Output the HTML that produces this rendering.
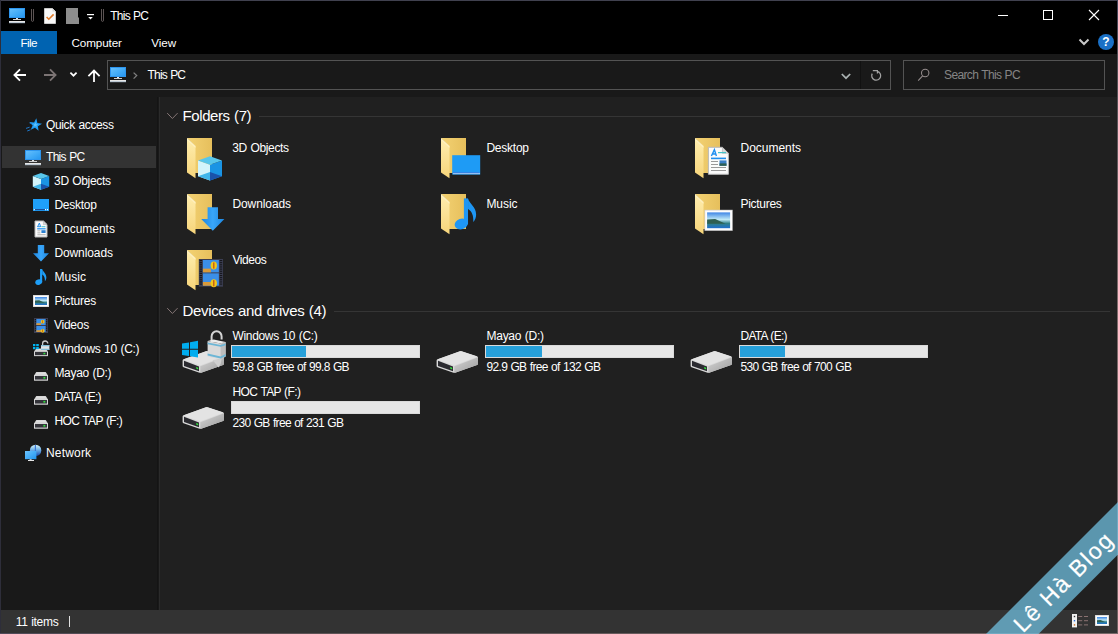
<!DOCTYPE html>
<html><head><meta charset="utf-8"><title>This PC</title>
<style>
html,body{margin:0;padding:0;}
body{width:1118px;height:634px;overflow:hidden;background:#000;position:relative;font-family:"Liberation Sans",sans-serif;}
.b{position:absolute;display:block;}
.t{position:absolute;white-space:pre;font-family:"Liberation Sans",sans-serif;}
</style></head><body>
<div class="b" style="left:0px;top:0px;width:1118px;height:634px;background:#000;"></div>
<div class="b" style="left:1px;top:54px;width:1116px;height:556px;background:#191919;"></div>
<div class="b" style="left:160px;top:97px;width:957px;height:513px;background:#202020;"></div>
<div class="b" style="left:159px;top:97px;width:1px;height:513px;background:#2b2b2b;"></div>
<div class="b" style="left:157px;top:97px;width:1px;height:513px;background:#141414;"></div>
<div class="b" style="left:1px;top:610px;width:1116px;height:23px;background:#333333;"></div>
<div class="b" style="left:0px;top:0px;width:1118px;height:1px;background:#40414f;"></div>
<div class="b" style="left:0px;top:0px;width:1px;height:634px;background:#2e2e3a;"></div>
<div class="b" style="left:1117px;top:0px;width:1px;height:634px;background:linear-gradient(180deg,#42435a 0,#4c4c52 60px,#7d6b6b 300px,#6e6060 100%);"></div>
<div class="b" style="left:0px;top:633px;width:1118px;height:1px;background:linear-gradient(90deg,#4f4a58 0,#5a4f52 20%,#776868 100%);"></div>
<div class="b" style="left:1px;top:31px;width:56px;height:23px;background:#0063b1;"></div>
<div class="b" style="left:107px;top:60px;width:784px;height:30px;background:transparent;border:1px solid #535353;box-sizing:border-box;"></div>
<div class="b" style="left:860px;top:61px;width:1px;height:28px;background:#111111;"></div>
<div class="b" style="left:903px;top:60px;width:202px;height:30px;background:transparent;border:1px solid #535353;box-sizing:border-box;"></div>
<div class="b" style="left:2px;top:146px;width:154px;height:22px;background:#333333;"></div>
<div class="t" style="left:110.30px;top:9.84px;font-size:12px;line-height:12px;letter-spacing:-0.762px;word-spacing:0.6px;color:#fff;">This PC</div>
<div class="t" style="left:20.60px;top:37.10px;font-size:11.7px;line-height:11.7px;letter-spacing:-0.609px;word-spacing:0.6px;color:#fff;">File</div>
<div class="t" style="left:71.50px;top:37.10px;font-size:11.7px;line-height:11.7px;letter-spacing:-0.116px;word-spacing:0.6px;color:#fff;">Computer</div>
<div class="t" style="left:151.20px;top:37.10px;font-size:11.7px;line-height:11.7px;letter-spacing:-0.057px;word-spacing:0.6px;color:#fff;">View</div>
<div class="t" style="left:147.60px;top:68.84px;font-size:12px;line-height:12px;letter-spacing:-0.812px;word-spacing:0.6px;color:#fff;">This PC</div>
<div class="t" style="left:944.10px;top:68.84px;font-size:12px;line-height:12px;letter-spacing:-0.655px;word-spacing:0.6px;color:#858585;">Search This PC</div>
<div class="t" style="left:15.70px;top:615.84px;font-size:12px;line-height:12px;letter-spacing:-0.296px;word-spacing:0.6px;color:#fff;">11 items</div>
<div class="b" style="left:69px;top:616px;width:1px;height:11px;background:#e0e0e0;"></div>
<div class="t" style="left:46.00px;top:118.84px;font-size:12px;line-height:12px;letter-spacing:-0.360px;word-spacing:0.6px;color:#fff;">Quick access</div>
<div class="t" style="left:46.00px;top:150.84px;font-size:12px;line-height:12px;letter-spacing:-0.695px;word-spacing:0.6px;color:#fff;">This PC</div>
<div class="t" style="left:54.10px;top:174.84px;font-size:12px;line-height:12px;letter-spacing:-0.351px;word-spacing:0.6px;color:#fff;">3D Objects</div>
<div class="t" style="left:54.40px;top:198.84px;font-size:12px;line-height:12px;letter-spacing:-0.253px;word-spacing:0.6px;color:#fff;">Desktop</div>
<div class="t" style="left:54.40px;top:222.84px;font-size:12px;line-height:12px;letter-spacing:-0.023px;word-spacing:0.6px;color:#fff;">Documents</div>
<div class="t" style="left:54.40px;top:246.84px;font-size:12px;line-height:12px;letter-spacing:-0.097px;word-spacing:0.6px;color:#fff;">Downloads</div>
<div class="t" style="left:54.40px;top:270.84px;font-size:12px;line-height:12px;letter-spacing:0.039px;word-spacing:0.6px;color:#fff;">Music</div>
<div class="t" style="left:54.40px;top:294.84px;font-size:12px;line-height:12px;letter-spacing:-0.221px;word-spacing:0.6px;color:#fff;">Pictures</div>
<div class="t" style="left:54.00px;top:318.84px;font-size:12px;line-height:12px;letter-spacing:-0.254px;word-spacing:0.6px;color:#fff;">Videos</div>
<div class="t" style="left:54.00px;top:342.84px;font-size:12px;line-height:12px;letter-spacing:-0.313px;word-spacing:0.6px;color:#fff;">Windows 10 (C:)</div>
<div class="t" style="left:54.40px;top:366.84px;font-size:12px;line-height:12px;letter-spacing:-0.305px;word-spacing:0.6px;color:#fff;">Mayao (D:)</div>
<div class="t" style="left:54.40px;top:390.84px;font-size:12px;line-height:12px;letter-spacing:-0.702px;word-spacing:0.6px;color:#fff;">DATA (E:)</div>
<div class="t" style="left:54.40px;top:414.84px;font-size:12px;line-height:12px;letter-spacing:-0.618px;word-spacing:0.6px;color:#fff;">HOC TAP (F:)</div>
<div class="t" style="left:46.00px;top:446.84px;font-size:12px;line-height:12px;letter-spacing:0.176px;word-spacing:0.6px;color:#fff;">Network</div>
<div class="t" style="left:182.50px;top:108.30px;font-size:15px;line-height:15px;letter-spacing:-0.402px;word-spacing:0.6px;color:#fff;">Folders (7)</div>
<div class="b" style="left:259px;top:116px;width:851px;height:1px;background:#353535;"></div>
<div class="t" style="left:182.50px;top:303.30px;font-size:15px;line-height:15px;letter-spacing:-0.334px;word-spacing:0.6px;color:#fff;">Devices and drives (4)</div>
<div class="b" style="left:334px;top:311px;width:776px;height:1px;background:#353535;"></div>
<div class="t" style="left:232.30px;top:141.84px;font-size:12px;line-height:12px;letter-spacing:-0.362px;word-spacing:0.6px;color:#fff;">3D Objects</div>
<div class="t" style="left:486.40px;top:141.84px;font-size:12px;line-height:12px;letter-spacing:-0.236px;word-spacing:0.6px;color:#fff;">Desktop</div>
<div class="t" style="left:740.50px;top:141.84px;font-size:12px;line-height:12px;letter-spacing:-0.023px;word-spacing:0.6px;color:#fff;">Documents</div>
<div class="t" style="left:232.40px;top:197.84px;font-size:12px;line-height:12px;letter-spacing:-0.084px;word-spacing:0.6px;color:#fff;">Downloads</div>
<div class="t" style="left:486.40px;top:197.84px;font-size:12px;line-height:12px;letter-spacing:-0.036px;word-spacing:0.6px;color:#fff;">Music</div>
<div class="t" style="left:740.50px;top:197.84px;font-size:12px;line-height:12px;letter-spacing:-0.292px;word-spacing:0.6px;color:#fff;">Pictures</div>
<div class="t" style="left:232.40px;top:253.84px;font-size:12px;line-height:12px;letter-spacing:-0.414px;word-spacing:0.6px;color:#fff;">Videos</div>
<div class="t" style="left:232.50px;top:329.84px;font-size:12px;line-height:12px;letter-spacing:-0.328px;word-spacing:0.6px;color:#fff;">Windows 10 (C:)</div>
<div class="t" style="left:232.50px;top:360.84px;font-size:12px;line-height:12px;letter-spacing:-0.666px;word-spacing:0.6px;color:#fff;">59.8 GB free of 99.8 GB</div>
<div class="b" style="left:231px;top:345px;width:189px;height:13px;background:#e6e6e6;border:1px solid #dadada;box-sizing:border-box;"></div>
<div class="b" style="left:232px;top:346px;width:74px;height:11px;background:#26a0da;"></div>
<div class="t" style="left:486.50px;top:329.84px;font-size:12px;line-height:12px;letter-spacing:-0.272px;word-spacing:0.6px;color:#fff;">Mayao (D:)</div>
<div class="t" style="left:486.50px;top:360.84px;font-size:12px;line-height:12px;letter-spacing:-0.667px;word-spacing:0.6px;color:#fff;">92.9 GB free of 132 GB</div>
<div class="b" style="left:485px;top:345px;width:189px;height:13px;background:#e6e6e6;border:1px solid #dadada;box-sizing:border-box;"></div>
<div class="b" style="left:486px;top:346px;width:56px;height:11px;background:#26a0da;"></div>
<div class="t" style="left:740.50px;top:329.84px;font-size:12px;line-height:12px;letter-spacing:-0.727px;word-spacing:0.6px;color:#fff;">DATA (E:)</div>
<div class="t" style="left:740.50px;top:360.84px;font-size:12px;line-height:12px;letter-spacing:-0.684px;word-spacing:0.6px;color:#fff;">530 GB free of 700 GB</div>
<div class="b" style="left:739px;top:345px;width:189px;height:13px;background:#e6e6e6;border:1px solid #dadada;box-sizing:border-box;"></div>
<div class="b" style="left:740px;top:346px;width:45px;height:11px;background:#26a0da;"></div>
<div class="t" style="left:232.50px;top:385.84px;font-size:12px;line-height:12px;letter-spacing:-0.618px;word-spacing:0.6px;color:#fff;">HOC TAP (F:)</div>
<div class="t" style="left:232.50px;top:416.84px;font-size:12px;line-height:12px;letter-spacing:-0.684px;word-spacing:0.6px;color:#fff;">230 GB free of 231 GB</div>
<div class="b" style="left:231px;top:401px;width:189px;height:13px;background:#e6e6e6;border:1px solid #dadada;box-sizing:border-box;"></div>
<svg class="b" style="left:0;top:0" width="1118" height="634" viewBox="0 0 1118 634"><polygon points="1118,502 1118,554.5 1038.5,634 986,634" fill="rgb(113,196,229)" fill-opacity="0.72"/></svg>
<svg width="0" height="0" style="position:absolute"><defs>
<linearGradient id="gScr" x1="0" y1="0" x2="1" y2="1"><stop offset="0" stop-color="#6cc2fc"/><stop offset=".5" stop-color="#45adf8"/><stop offset="1" stop-color="#2294ee"/></linearGradient>
<linearGradient id="gFb" x1="0" y1="0" x2="1" y2="0"><stop offset="0" stop-color="#f3d273"/><stop offset="1" stop-color="#e6bf5c"/></linearGradient>
<linearGradient id="gFf" x1="0" y1="0" x2="0" y2="1"><stop offset="0" stop-color="#ffeeb0"/><stop offset="1" stop-color="#f7d57a"/></linearGradient>
<linearGradient id="gDl" x1="0" y1="0" x2="1" y2="0"><stop offset="0" stop-color="#1c86e0"/><stop offset=".5" stop-color="#39a6fa"/><stop offset="1" stop-color="#1c86e0"/></linearGradient>
<linearGradient id="gDr" x1="0" y1="0" x2="1" y2="1"><stop offset="0" stop-color="#d6d6d6"/><stop offset="1" stop-color="#9c9c9c"/></linearGradient>
<linearGradient id="gGl" x1="0" y1="0" x2="0" y2="1"><stop offset="0" stop-color="#d8f4f6"/><stop offset=".45" stop-color="#6fb2e8"/><stop offset="1" stop-color="#1745a8"/></linearGradient>
<linearGradient id="gSky" x1="0" y1="0" x2="0" y2="1"><stop offset="0" stop-color="#3f86e6"/><stop offset=".45" stop-color="#bfe9f6"/><stop offset=".7" stop-color="#2f7f86"/><stop offset="1" stop-color="#1f6fd0"/></linearGradient>
</defs></svg>
<svg class="b" style="left:9px;top:8px;" width="16" height="16" viewBox="0 0 16 16"><rect x="0" y="0" width="16" height="10" fill="url(#gScr)"/><rect x="0.5" y="0.5" width="15" height="9" fill="none" stroke="#2d95ee" stroke-width="1"/><rect x="7" y="10" width="2" height="1" fill="#e8e8e8"/><rect x="4" y="11" width="8" height="1" fill="#cfcfcf"/><rect x="0" y="13" width="16" height="2" fill="#e6e6e6"/><rect x="0" y="14.3" width="16" height="0.9" fill="#a9b9c9"/></svg>
<svg class="b" style="left:30px;top:8px;" width="5" height="15" viewBox="0 0 5 15"><path d="M1.5 1 L1.5 12 Q1.5 13.5 2.5 13.5 Q3.5 13.5 3.5 12 L3.5 1" fill="none" stroke="#5c5454" stroke-width="1"/></svg>
<svg class="b" style="left:100px;top:8px;" width="5" height="15" viewBox="0 0 5 15"><path d="M1.5 1 L1.5 12 Q1.5 13.5 2.5 13.5 Q3.5 13.5 3.5 12 L3.5 1" fill="none" stroke="#5c5454" stroke-width="1"/></svg>
<svg class="b" style="left:44px;top:8px;" width="13" height="16" viewBox="0 0 13 16"><path d="M0.5 0.5 L8.5 0.5 L11.5 3.5 L11.5 15.5 L0.5 15.5 Z" fill="#f7f7f7" stroke="#c9c9c9"/><path d="M8.5 0.5 L8.5 3.5 L11.5 3.5 Z" fill="#d5d5d5"/><path d="M2.6 9 L4.8 11.2 L9.6 6.4" fill="none" stroke="#e07a2a" stroke-width="1.6"/></svg>
<svg class="b" style="left:66px;top:8px;" width="14" height="16" viewBox="0 0 14 16"><path d="M0 0 L12 0 L12 9 L13 10 L13 16 L0 16 Z" fill="#8d8d8d"/></svg>
<svg class="b" style="left:86px;top:13px;" width="9" height="8" viewBox="0 0 9 8"><rect x="1" y="1" width="7" height="1.2" fill="#fff"/><polygon points="2.2,4 6.8,4 4.5,6.6" fill="#fff"/></svg>
<div class="b" style="left:998px;top:15px;width:10px;height:1px;background:#fff;"></div>
<div class="b" style="left:1043px;top:10px;width:10px;height:10px;background:transparent;border:1px solid #fff;box-sizing:border-box;"></div>
<svg class="b" style="left:1088px;top:9px;" width="12" height="12" viewBox="0 0 12 12"><path d="M1 1 L11 11 M11 1 L1 11" stroke="#fff" stroke-width="1.1" fill="none"/></svg>
<svg class="b" style="left:1078px;top:37px;" width="12" height="10" viewBox="0 0 12 10"><path d="M1.5 2.5 L6 7 L10.5 2.5" fill="none" stroke="#c8c8c8" stroke-width="2"/></svg>
<svg class="b" style="left:1098px;top:34px;" width="16" height="16" viewBox="0 0 16 16"><circle cx="8" cy="8" r="8" fill="#1a70c6"/><text x="8" y="12.3" font-family="Liberation Sans" font-weight="bold" font-size="12" fill="#fff" text-anchor="middle">?</text></svg>
<svg class="b" style="left:13px;top:68px;" width="14" height="14" viewBox="0 0 14 14"><path d="M13 7 L1.6 7 M7 1.4 L1.4 7 L7 12.6" fill="none" stroke="#fff" stroke-width="1.8"/></svg>
<svg class="b" style="left:43px;top:68px;" width="14" height="14" viewBox="0 0 14 14"><path d="M1 7 L12.4 7 M7 1.4 L12.6 7 L7 12.6" fill="none" stroke="#7c7474" stroke-width="1.8"/></svg>
<svg class="b" style="left:69px;top:71px;" width="9" height="7" viewBox="0 0 9 7"><path d="M1.4 1.6 L4.5 4.7 L7.6 1.6" fill="none" stroke="#fff" stroke-width="1.7"/></svg>
<svg class="b" style="left:87px;top:69px;" width="14" height="14" viewBox="0 0 14 14"><path d="M7 13 L7 1.6 M1.4 7.2 L7 1.6 L12.6 7.2" fill="none" stroke="#fff" stroke-width="1.8"/></svg>
<svg class="b" style="left:110px;top:67px;" width="16" height="16" viewBox="0 0 16 16"><rect x="0" y="0" width="16" height="10" fill="url(#gScr)"/><rect x="0.5" y="0.5" width="15" height="9" fill="none" stroke="#2d95ee" stroke-width="1"/><rect x="7" y="10" width="2" height="1" fill="#e8e8e8"/><rect x="4" y="11" width="8" height="1" fill="#cfcfcf"/><rect x="0" y="13" width="16" height="2" fill="#e6e6e6"/><rect x="0" y="14.3" width="16" height="0.9" fill="#a9b9c9"/></svg>
<svg class="b" style="left:132px;top:71px;" width="7" height="9" viewBox="0 0 7 9"><path d="M1.6 1.6 L4.7 4.6 L1.6 7.6" fill="none" stroke="#7f7f7f" stroke-width="1.3"/></svg>
<svg class="b" style="left:840px;top:72px;" width="12" height="9" viewBox="0 0 12 9"><path d="M1.8 2 L6 6.2 L10.2 2" fill="none" stroke="#aab2b2" stroke-width="1.7"/></svg>
<svg class="b" style="left:869px;top:68px;" width="14" height="14" viewBox="0 0 14 14"><path d="M8.2 3.3 A4.5 4.5 0 1 1 3.2 5.6" fill="none" stroke="#a2a2a2" stroke-width="1.3"/><path d="M3.8 2.6 L8.4 2.6 L8.4 5.6" fill="none" stroke="#a2a2a2" stroke-width="1.2"/></svg>
<svg class="b" style="left:917px;top:68px;" width="13" height="14" viewBox="0 0 13 14"><circle cx="8.2" cy="5" r="3.7" fill="none" stroke="#958d8d" stroke-width="1.05"/><path d="M5.6 7.8 L1.2 12.6" stroke="#958d8d" stroke-width="1.05"/></svg>
<svg class="b" style="left:25px;top:118px;" width="18" height="15" viewBox="0 0 18 15"><polygon points="11.33,0.27 12.35,4.89 17.00,5.74 12.92,8.13 13.55,12.82 10.01,9.67 5.75,11.72 7.64,7.39 4.38,3.96 9.09,4.43" fill="#1e9df5"/><polygon points="11.33,0.27 12.35,4.89 17.00,5.74 12.92,8.13 13.55,12.82 10.01,9.67 5.75,11.72 7.64,7.39 4.38,3.96 9.09,4.43" fill="#5cc0fb" transform="translate(10.4 6.9) scale(.42) translate(-10.4 -6.9)"/><path d="M1 10.4 L4.6 9.2 M2.2 13 L5.4 11.8 M4.6 5 L7 5.8" stroke="#1e80da" stroke-width=".9"/></svg>
<svg class="b" style="left:25px;top:150px;" width="16" height="16" viewBox="0 0 16 16"><rect x="0" y="0" width="16" height="10" fill="url(#gScr)"/><rect x="0.5" y="0.5" width="15" height="9" fill="none" stroke="#2d95ee" stroke-width="1"/><rect x="7" y="10" width="2" height="1" fill="#e8e8e8"/><rect x="4" y="11" width="8" height="1" fill="#cfcfcf"/><rect x="0" y="13" width="16" height="2" fill="#e6e6e6"/><rect x="0" y="14.3" width="16" height="0.9" fill="#a9b9c9"/></svg>
<svg class="b" style="left:32px;top:172px;" width="18" height="18" viewBox="0 0 18 18"><polygon points="0.8000000000000007,3.9519999999999995 9,6.903999999999999 9,17.645999999999997 0.8000000000000007,14.693999999999997" fill="#d3f4fb"/><polygon points="17.2,3.9519999999999995 9,6.903999999999999 9,17.645999999999997 17.2,14.693999999999997" fill="#1a94e4"/><polygon points="0.8000000000000007,14.693999999999997 9,11.741999999999997 9,17.645999999999997" fill="#41b6ea"/><polygon points="17.2,14.693999999999997 9,11.741999999999997 9,17.645999999999997" fill="#1a52aa"/><polygon points="9,1 17.2,3.9519999999999995 9,6.903999999999999 0.8000000000000007,3.9519999999999995" fill="#58c6eb"/></svg>
<svg class="b" style="left:33px;top:199px;" width="16" height="12" viewBox="0 0 16 12"><rect width="16" height="12" fill="#1fa0fa"/><rect x="1.5" y="10" width="11" height="1.2" fill="#1a4f9a"/><rect x=".8" y="10" width="1" height="1.2" fill="#fff"/><rect x="12" y="10" width="1" height="1.2" fill="#fff"/><rect x="14" y="10" width="1" height="1.2" fill="#fff"/></svg>
<svg class="b" style="left:34px;top:220px;" width="14" height="18" viewBox="0 0 14 18"><path d="M1 1 L9.4 1 L13 4.6 L13 17 L1 17 Z" fill="#fbfbfb" stroke="#b9b9b9" stroke-width="1"/><path d="M9.4 1 L9.4 4.6 L13 4.6 Z" fill="#d9d9d9" stroke="#b0b0b0" stroke-width=".6"/><rect x="3.4" y="6.2" width="3" height="1" fill="#2a8fe8"/><rect x="7.4" y="6.2" width="4" height="1" fill="#45c3c9"/><rect x="3.2" y="8.2" width="8.4" height="1.2" fill="#1e8ff0"/><rect x="3.4" y="10.4" width="3" height=".9" fill="#aaa"/><rect x="7.4" y="10.2" width="4.2" height="2.8" fill="#2a7fd0"/><rect x="3.4" y="12.4" width="3" height=".9" fill="#aaa"/><rect x="3.4" y="14.3" width="8.2" height=".9" fill="#aaa"/><path d="M3.6 6.8 L5.4 3 L6.6 6.8" stroke="#1e8ff0" stroke-width="1" fill="none"/></svg>
<svg class="b" style="left:33px;top:245px;" width="16" height="17" viewBox="0 0 16 17"><polygon points="4.8,0 11.2,0 11.2,8.25 16,8.25 8.0,16.5 0,8.25 4.8,8.25" fill="url(#gDl)"/></svg>
<svg class="b" style="left:35px;top:269px;" width="12" height="17" viewBox="0 0 12 17"><g transform="translate(0.2,0) scale(0.97)" fill="#1e9ff8"><ellipse cx="3.6" cy="13.6" rx="3.6" ry="2.8" transform="rotate(-18 3.6 13.6)"/><rect x="5" y="0" width="2.2" height="13.8"/><path d="M7.2 0 C8 3 11.5 4.5 11.5 8.5 C11.5 10.3 10.9 11.5 10 12.6 C10.2 9 9.2 6.8 7.2 5.6 Z"/></g></svg>
<svg class="b" style="left:33px;top:295px;" width="16" height="12" viewBox="0 0 16 12"><rect x="0" y="0" width="16" height="12" fill="#cfcfcf"/><rect x="0.7" y="0.7" width="14.6" height="10.6" fill="#fdfdfd"/><rect x="2" y="2" width="12" height="8" fill="url(#gSky)"/><path d="M2 5.6 L6.199999999999999 5.359999999999999 L11.600000000000001 7.76 L2 7.76 Z" fill="#2f5f52"/></svg>
<svg class="b" style="left:34px;top:318px;" width="14" height="15" viewBox="0 0 14 15"><rect x="0" y="0" width="14" height="15" fill="#3b3e52"/><rect x="0.8" y="1.00" width="1.40" height="1.08" fill="#15151a"/><rect x="11.80" y="1.00" width="1.40" height="1.08" fill="#15151a"/><rect x="0.8" y="3.17" width="1.40" height="1.08" fill="#15151a"/><rect x="11.80" y="3.17" width="1.40" height="1.08" fill="#15151a"/><rect x="0.8" y="5.33" width="1.40" height="1.08" fill="#15151a"/><rect x="11.80" y="5.33" width="1.40" height="1.08" fill="#15151a"/><rect x="0.8" y="7.50" width="1.40" height="1.08" fill="#15151a"/><rect x="11.80" y="7.50" width="1.40" height="1.08" fill="#15151a"/><rect x="0.8" y="9.67" width="1.40" height="1.08" fill="#15151a"/><rect x="11.80" y="9.67" width="1.40" height="1.08" fill="#15151a"/><rect x="0.8" y="11.83" width="1.40" height="1.08" fill="#15151a"/><rect x="11.80" y="11.83" width="1.40" height="1.08" fill="#15151a"/><rect x="2.38" y="1.00" width="9.24" height="6.00" fill="#3b8fe8"/><rect x="2.38" y="5.20" width="4.62" height="1.80" fill="#d99a3a"/><ellipse cx="8.66" cy="3.70" rx="1.85" ry="1.92" fill="#f2c81a"/><rect x="8.29" y="2.20" width="0.74" height="3.00" fill="#c0521a"/><rect x="2.38" y="8.00" width="9.24" height="6.00" fill="#3b8fe8"/><rect x="2.38" y="12.20" width="4.62" height="1.80" fill="#d99a3a"/><ellipse cx="8.66" cy="12.80" rx="1.85" ry="1.92" fill="#f2c81a"/><rect x="8.29" y="11.30" width="0.74" height="3.00" fill="#c0521a"/></svg>
<svg class="b" style="left:34px;top:348px;" width="14" height="9" viewBox="0 0 14 9"><g transform="translate(0,0.5) scale(1,0.88)"><polygon points="2.3,0 11.7,0 14,3.4 0,3.4" fill="#cfcfcf"/><polygon points="2.6,0.5 11.4,0.5 12.6,2.4 1.4,2.4" fill="#dedede"/><rect x="0" y="3" width="14" height="5.6" rx=".6" fill="#e9e9e9"/><rect x="0.9" y="3.9" width="12.2" height="3.7" fill="#34343a"/><rect x="9.4" y="4.9" width="1.9" height="1.7" fill="#2fe23a"/><rect x="0" y="8.1" width="14" height=".6" fill="#b5b5b5"/></g></svg>
<svg class="b" style="left:33px;top:344px;" width="6" height="6" viewBox="0 0 6 6"><g fill="#00b4f0"><rect x="0" y="0" width="2.4" height="2.2"/><rect x="3.2" y="0" width="2.6" height="2.2"/><rect x="0" y="3" width="2.4" height="2.2"/><rect x="3.2" y="3" width="2.6" height="2.2"/></g></svg>
<svg class="b" style="left:40px;top:340px;" width="10" height="11" viewBox="0 0 10 11"><path d="M2.6 5 L2.6 3.6 A2.6 2.6 0 0 1 7.8 3.6" fill="none" stroke="#c9c9c9" stroke-width="1.3"/><rect x="1" y="5" width="8.4" height="5" fill="#e4e4e4"/><rect x="1" y="5.2" width="8.4" height="1" fill="#6cb6d6"/><rect x="1" y="8.8" width="8.4" height="1" fill="#6cb6d6"/></svg>
<svg class="b" style="left:34px;top:372px;" width="14" height="9" viewBox="0 0 14 9"><polygon points="2.3,0 11.7,0 14,3.4 0,3.4" fill="#cfcfcf"/><polygon points="2.6,0.5 11.4,0.5 12.6,2.4 1.4,2.4" fill="#dedede"/><rect x="0" y="3" width="14" height="5.6" rx=".6" fill="#e9e9e9"/><rect x="0.9" y="3.9" width="12.2" height="3.7" fill="#34343a"/><rect x="9.4" y="4.9" width="1.9" height="1.7" fill="#2fe23a"/><rect x="0" y="8.1" width="14" height=".6" fill="#b5b5b5"/></svg>
<svg class="b" style="left:34px;top:396px;" width="14" height="9" viewBox="0 0 14 9"><polygon points="2.3,0 11.7,0 14,3.4 0,3.4" fill="#cfcfcf"/><polygon points="2.6,0.5 11.4,0.5 12.6,2.4 1.4,2.4" fill="#dedede"/><rect x="0" y="3" width="14" height="5.6" rx=".6" fill="#e9e9e9"/><rect x="0.9" y="3.9" width="12.2" height="3.7" fill="#34343a"/><rect x="9.4" y="4.9" width="1.9" height="1.7" fill="#2fe23a"/><rect x="0" y="8.1" width="14" height=".6" fill="#b5b5b5"/></svg>
<svg class="b" style="left:34px;top:420px;" width="14" height="9" viewBox="0 0 14 9"><polygon points="2.3,0 11.7,0 14,3.4 0,3.4" fill="#cfcfcf"/><polygon points="2.6,0.5 11.4,0.5 12.6,2.4 1.4,2.4" fill="#dedede"/><rect x="0" y="3" width="14" height="5.6" rx=".6" fill="#e9e9e9"/><rect x="0.9" y="3.9" width="12.2" height="3.7" fill="#34343a"/><rect x="9.4" y="4.9" width="1.9" height="1.7" fill="#2fe23a"/><rect x="0" y="8.1" width="14" height=".6" fill="#b5b5b5"/></svg>
<svg class="b" style="left:25px;top:444px;" width="17" height="18" viewBox="0 0 17 18"><circle cx="10.6" cy="6.4" r="5.7" fill="url(#gGl)"/><path d="M10.4 1 L10.4 9" stroke="#3a78d8" stroke-width="1.2"/><rect x="0" y="7" width="11.4" height="8.2" fill="url(#gScr)"/><rect x="4.6" y="15.2" width="2" height="1" fill="#ddd"/><rect x="3" y="16" width="6" height="1" fill="#e6e6e6"/></svg>
<svg class="b" style="left:166px;top:111px;" width="13" height="9" viewBox="0 0 13 9"><path d="M1.2 2.1 L6.4 7.5 L11.6 2.1" fill="none" stroke="#857676" stroke-width="1"/></svg>
<svg class="b" style="left:166px;top:306px;" width="13" height="9" viewBox="0 0 13 9"><path d="M1.2 2.1 L6.4 7.5 L11.6 2.1" fill="none" stroke="#857676" stroke-width="1"/></svg>
<svg class="b" style="left:186px;top:138px;" width="48" height="44" viewBox="0 0 48 44"><polygon points="1,0 26,0 26,35 9,35 9,8" fill="url(#gFb)"/><polygon points="1,0 9.5,8 9.5,40.2 1,34.5" fill="url(#gFf)"/><polygon points="1,0 9.5,8 9.5,10 1,2" fill="#fff3c4" opacity=".8"/><polygon points="12,22.52 24,26.84 24,42.56 12,38.24" fill="#d3f4fb"/><polygon points="36,22.52 24,26.84 24,42.56 36,38.24" fill="#1a94e4"/><polygon points="12,38.24 24,33.92 24,42.56" fill="#41b6ea"/><polygon points="36,38.24 24,33.92 24,42.56" fill="#1a52aa"/><polygon points="24,18.2 36,22.52 24,26.84 12,22.52" fill="#58c6eb"/></svg>
<svg class="b" style="left:440px;top:138px;" width="48" height="44" viewBox="0 0 48 44"><polygon points="1,0 26,0 26,35 9,35 9,8" fill="url(#gFb)"/><polygon points="1,0 9.5,8 9.5,40.2 1,34.5" fill="url(#gFf)"/><polygon points="1,0 9.5,8 9.5,10 1,2" fill="#fff3c4" opacity=".8"/><rect x="12.2" y="17.2" width="28" height="19.4" fill="#1e9bf5"/><rect x="13" y="34.2" width="26" height="1.6" fill="#3b7fe0"/><rect x="13" y="35.2" width="27" height="1" fill="#dfefff" opacity=".7"/></svg>
<svg class="b" style="left:694px;top:138px;" width="48" height="44" viewBox="0 0 48 44"><polygon points="1,0 26,0 26,35 9,35 9,8" fill="url(#gFb)"/><polygon points="1,0 9.5,8 9.5,40.2 1,34.5" fill="url(#gFf)"/><polygon points="1,0 9.5,8 9.5,10 1,2" fill="#fff3c4" opacity=".8"/><path d="M14.4 9.3 L28.4 9.3 L34.4 15.3 L34.4 36.3 L14.4 36.3 Z" fill="#fbfbfb" stroke="#b9b9b9" stroke-width="1"/><path d="M28.4 9.3 L28.4 15.3 L34.4 15.3 Z" fill="#d9d9d9" stroke="#b0b0b0" stroke-width=".6"/><path d="M17.4 18 L20.4 11.6 L22.4 18 M18.4 16 L21.6 16" stroke="#1e8ff0" stroke-width="1.4" fill="none"/><rect x="24" y="14" width="8" height="1.2" fill="#45c3c9"/><rect x="17" y="19.6" width="15" height="1.6" fill="#1e8ff0"/><rect x="17" y="23" width="7" height="1" fill="#999"/><rect x="17" y="26" width="7" height="1" fill="#999"/><rect x="17" y="29" width="15" height="1" fill="#999"/><rect x="17" y="32" width="15" height="1" fill="#999"/><rect x="25.5" y="22.4" width="7" height="5.4" fill="#3a7fc8"/><rect x="25.5" y="25.4" width="7" height="2.4" fill="#2f5f52"/></svg>
<svg class="b" style="left:186px;top:194px;" width="48" height="44" viewBox="0 0 48 44"><polygon points="1,0 26,0 26,35 9,35 9,8" fill="url(#gFb)"/><polygon points="1,0 9.5,8 9.5,40.2 1,34.5" fill="url(#gFf)"/><polygon points="1,0 9.5,8 9.5,10 1,2" fill="#fff3c4" opacity=".8"/><polygon points="21.599999999999998,13.2 31.999999999999996,13.2 31.999999999999996,25.0 38.4,25.0 26.799999999999997,36.8 15.2,25.0 21.599999999999998,25.0" fill="url(#gDl)"/></svg>
<svg class="b" style="left:440px;top:194px;" width="48" height="44" viewBox="0 0 48 44"><polygon points="1,0 26,0 26,35 9,35 9,8" fill="url(#gFb)"/><polygon points="1,0 9.5,8 9.5,40.2 1,34.5" fill="url(#gFf)"/><polygon points="1,0 9.5,8 9.5,10 1,2" fill="#fff3c4" opacity=".8"/><g transform="translate(14.5,4.4) scale(1.88)" fill="#1e96f4"><ellipse cx="3.6" cy="13.6" rx="3.6" ry="2.8" transform="rotate(-18 3.6 13.6)"/><rect x="5" y="0" width="2.2" height="13.8"/><path d="M7.2 0 C8 3 11.5 4.5 11.5 8.5 C11.5 10.3 10.9 11.5 10 12.6 C10.2 9 9.2 6.8 7.2 5.6 Z"/></g></svg>
<svg class="b" style="left:694px;top:194px;" width="48" height="44" viewBox="0 0 48 44"><polygon points="1,0 26,0 26,35 9,35 9,8" fill="url(#gFb)"/><polygon points="1,0 9.5,8 9.5,40.2 1,34.5" fill="url(#gFf)"/><polygon points="1,0 9.5,8 9.5,10 1,2" fill="#fff3c4" opacity=".8"/><rect x="10.5" y="15.8" width="28.2" height="21" fill="#cfcfcf"/><rect x="11.2" y="16.5" width="26.8" height="19.6" fill="#fdfdfd"/><rect x="13.1" y="18.400000000000002" width="23.0" height="15.8" fill="url(#gSky)"/><path d="M13.1 25.51 L21.15 25.036 L31.5 29.776000000000003 L13.1 29.776000000000003 Z" fill="#2f5f52"/></svg>
<svg class="b" style="left:186px;top:250px;" width="48" height="44" viewBox="0 0 48 44"><polygon points="1,0 26,0 26,35 9,35 9,8" fill="url(#gFb)"/><polygon points="1,0 9.5,8 9.5,40.2 1,34.5" fill="url(#gFf)"/><polygon points="1,0 9.5,8 9.5,10 1,2" fill="#fff3c4" opacity=".8"/><rect x="12.8" y="9" width="24.2" height="27.7" fill="#3b3e52"/><rect x="13.600000000000001" y="10.00" width="2.42" height="1.07" fill="#15151a"/><rect x="33.78" y="10.00" width="2.42" height="1.07" fill="#15151a"/><rect x="13.600000000000001" y="12.14" width="2.42" height="1.07" fill="#15151a"/><rect x="33.78" y="12.14" width="2.42" height="1.07" fill="#15151a"/><rect x="13.600000000000001" y="14.28" width="2.42" height="1.07" fill="#15151a"/><rect x="33.78" y="14.28" width="2.42" height="1.07" fill="#15151a"/><rect x="13.600000000000001" y="16.43" width="2.42" height="1.07" fill="#15151a"/><rect x="33.78" y="16.43" width="2.42" height="1.07" fill="#15151a"/><rect x="13.600000000000001" y="18.57" width="2.42" height="1.07" fill="#15151a"/><rect x="33.78" y="18.57" width="2.42" height="1.07" fill="#15151a"/><rect x="13.600000000000001" y="20.71" width="2.42" height="1.07" fill="#15151a"/><rect x="33.78" y="20.71" width="2.42" height="1.07" fill="#15151a"/><rect x="13.600000000000001" y="22.85" width="2.42" height="1.07" fill="#15151a"/><rect x="33.78" y="22.85" width="2.42" height="1.07" fill="#15151a"/><rect x="13.600000000000001" y="24.99" width="2.42" height="1.07" fill="#15151a"/><rect x="33.78" y="24.99" width="2.42" height="1.07" fill="#15151a"/><rect x="13.600000000000001" y="27.13" width="2.42" height="1.07" fill="#15151a"/><rect x="33.78" y="27.13" width="2.42" height="1.07" fill="#15151a"/><rect x="13.600000000000001" y="29.27" width="2.42" height="1.07" fill="#15151a"/><rect x="33.78" y="29.27" width="2.42" height="1.07" fill="#15151a"/><rect x="13.600000000000001" y="31.42" width="2.42" height="1.07" fill="#15151a"/><rect x="33.78" y="31.42" width="2.42" height="1.07" fill="#15151a"/><rect x="13.600000000000001" y="33.56" width="2.42" height="1.07" fill="#15151a"/><rect x="33.78" y="33.56" width="2.42" height="1.07" fill="#15151a"/><rect x="16.91" y="10.00" width="15.97" height="12.35" fill="#3b8fe8"/><rect x="16.91" y="18.64" width="7.99" height="3.70" fill="#d99a3a"/><ellipse cx="27.77" cy="15.56" rx="3.19" ry="3.95" fill="#f2c81a"/><rect x="27.14" y="12.47" width="1.28" height="6.17" fill="#c0521a"/><rect x="16.91" y="23.35" width="15.97" height="12.35" fill="#3b8fe8"/><rect x="16.91" y="32.00" width="7.99" height="3.70" fill="#d99a3a"/><ellipse cx="27.77" cy="33.23" rx="3.19" ry="3.95" fill="#f2c81a"/><rect x="27.14" y="30.14" width="1.28" height="6.17" fill="#c0521a"/></svg>
<svg class="b" style="left:436px;top:350px;" width="44" height="24" viewBox="0 0 44 24"><path d="M0.6 16 L0.6 10.6 Q0.6 9.6 1.6 9.2 L23.8 1.3 Q24.9 1 26 1.4 L41.2 6.4 Q42 6.8 42 7.8 L42 13.6 Q42 14.6 41 15.1 L19.8 22.6 Q18.3 23.1 16.8 22.5 L1.5 17.3 Q0.6 16.9 0.6 16 Z" fill="#d9d9d9"/><path d="M18.3 16.2 L42 7.2 L42 13.6 Q42 14.6 41 15.1 L19.8 22.6 Q18.3 23.1 18.3 22 Z" fill="url(#gDr)"/><path d="M1.2 9.4 L24.9 1 L41.6 6.6 L18.3 15.6 Z" fill="#e3e3e3"/><path d="M2 10.8 L17 16.4 L17 21.3 L2 16 Z" fill="#2b2b30"/><path d="M14.2 17 L16.2 17.8 L16.2 19.4 L14.2 18.6 Z" fill="#35e640"/></svg>
<svg class="b" style="left:690px;top:350px;" width="44" height="24" viewBox="0 0 44 24"><path d="M0.6 16 L0.6 10.6 Q0.6 9.6 1.6 9.2 L23.8 1.3 Q24.9 1 26 1.4 L41.2 6.4 Q42 6.8 42 7.8 L42 13.6 Q42 14.6 41 15.1 L19.8 22.6 Q18.3 23.1 16.8 22.5 L1.5 17.3 Q0.6 16.9 0.6 16 Z" fill="#d9d9d9"/><path d="M18.3 16.2 L42 7.2 L42 13.6 Q42 14.6 41 15.1 L19.8 22.6 Q18.3 23.1 18.3 22 Z" fill="url(#gDr)"/><path d="M1.2 9.4 L24.9 1 L41.6 6.6 L18.3 15.6 Z" fill="#e3e3e3"/><path d="M2 10.8 L17 16.4 L17 21.3 L2 16 Z" fill="#2b2b30"/><path d="M14.2 17 L16.2 17.8 L16.2 19.4 L14.2 18.6 Z" fill="#35e640"/></svg>
<svg class="b" style="left:182px;top:406px;" width="44" height="24" viewBox="0 0 44 24"><path d="M0.6 16 L0.6 10.6 Q0.6 9.6 1.6 9.2 L23.8 1.3 Q24.9 1 26 1.4 L41.2 6.4 Q42 6.8 42 7.8 L42 13.6 Q42 14.6 41 15.1 L19.8 22.6 Q18.3 23.1 16.8 22.5 L1.5 17.3 Q0.6 16.9 0.6 16 Z" fill="#d9d9d9"/><path d="M18.3 16.2 L42 7.2 L42 13.6 Q42 14.6 41 15.1 L19.8 22.6 Q18.3 23.1 18.3 22 Z" fill="url(#gDr)"/><path d="M1.2 9.4 L24.9 1 L41.6 6.6 L18.3 15.6 Z" fill="#e3e3e3"/><path d="M2 10.8 L17 16.4 L17 21.3 L2 16 Z" fill="#2b2b30"/><path d="M14.2 17 L16.2 17.8 L16.2 19.4 L14.2 18.6 Z" fill="#35e640"/></svg>
<svg class="b" style="left:182px;top:350px;" width="44" height="24" viewBox="0 0 44 24"><path d="M0.6 16 L0.6 10.6 Q0.6 9.6 1.6 9.2 L23.8 1.3 Q24.9 1 26 1.4 L41.2 6.4 Q42 6.8 42 7.8 L42 13.6 Q42 14.6 41 15.1 L19.8 22.6 Q18.3 23.1 16.8 22.5 L1.5 17.3 Q0.6 16.9 0.6 16 Z" fill="#d9d9d9"/><path d="M18.3 16.2 L42 7.2 L42 13.6 Q42 14.6 41 15.1 L19.8 22.6 Q18.3 23.1 18.3 22 Z" fill="url(#gDr)"/><path d="M1.2 9.4 L24.9 1 L41.6 6.6 L18.3 15.6 Z" fill="#e3e3e3"/><path d="M2 10.8 L17 16.4 L17 21.3 L2 16 Z" fill="#2b2b30"/><path d="M14.2 17 L16.2 17.8 L16.2 19.4 L14.2 18.6 Z" fill="#35e640"/></svg>
<svg class="b" style="left:182px;top:340px;" width="17" height="19" viewBox="0 0 17 19"><g transform="translate(0,0.8)" fill="#00adef"><polygon points="0,2.6 7,1.6 7,8 0,8"/><polygon points="8,1.4 16,0 16,8 8,8"/><polygon points="0,9 7,9 7,15.2 0,14.2"/><polygon points="8,9 16,9 16,16.8 8,15.4"/></g></svg>
<svg class="b" style="left:207px;top:329px;" width="20" height="40" viewBox="0 0 20 40"><g transform="translate(0.6,1)"><path d="M4 12 L4 6.5 A5 5.3 0 0 1 14 6.5 L14 9.5" fill="none" stroke="#d4d4d4" stroke-width="2"/><path d="M5 30 L11 37.5 L13 34 L14 29 Z" fill="#d0d0d0"/><path d="M0 11 L13 13.5 L18 12 L18 26.5 L13 29.5 L0 26.5 Z" fill="#dadada"/><path d="M13 13.5 L18 12 L18 26.5 L13 29.5 Z" fill="#bdbdbd"/><path d="M0 11 L6 9.6 L18 12 L13 13.5 Z" fill="#ececec"/><path d="M0 12.5 L13 15 L18 13.5 L18 15.2 L13 16.8 L0 14.2 Z" fill="#6cb6d6"/><path d="M0 23.6 L13 26.4 L18 24 L18 26 L13 28.6 L0 25.6 Z" fill="#6cb6d6"/></g></svg>
<svg class="b" style="left:1072px;top:614px;" width="17" height="14" viewBox="0 0 17 14"><rect x="0" y="0" width="5" height="13.4" fill="#f2f2f2"/><rect x="1.8" y="1.8" width="1.4" height="1.4" fill="#333"/><rect x="1.8" y="6" width="1.4" height="1.4" fill="#2a6fe0"/><rect x="1.8" y="10.2" width="1.4" height="1.4" fill="#d0701a"/><g fill="#8a7272"><rect x="6.2" y="2" width="4" height="1"/><rect x="12" y="2" width="4" height="1"/><rect x="6.2" y="6.2" width="4" height="1"/><rect x="12" y="6.2" width="4" height="1"/><rect x="6.2" y="10.4" width="4" height="1"/><rect x="12" y="10.4" width="4" height="1"/></g></svg>
<svg class="b" style="left:1095px;top:615px;" width="14" height="11" viewBox="0 0 14 11"><rect x="0" y="0" width="14" height="11" fill="#cfcfcf"/><rect x="0.7" y="0.7" width="12.6" height="9.6" fill="#fdfdfd"/><rect x="2" y="2" width="10" height="7" fill="url(#gSky)"/><path d="M2 5.15 L5.5 4.9399999999999995 L10.0 7.04 L2 7.04 Z" fill="#2f5f52"/></svg>
<svg class="b" style="left:0;top:0" width="1118" height="634" viewBox="0 0 1118 634"><text transform="translate(1023.1,633.6) rotate(-45)" font-family="Liberation Sans" font-size="23" letter-spacing="1.7" fill="#fff" stroke="#fff" stroke-width="0.2">Lê Hà Blog</text></svg>
</body></html>
